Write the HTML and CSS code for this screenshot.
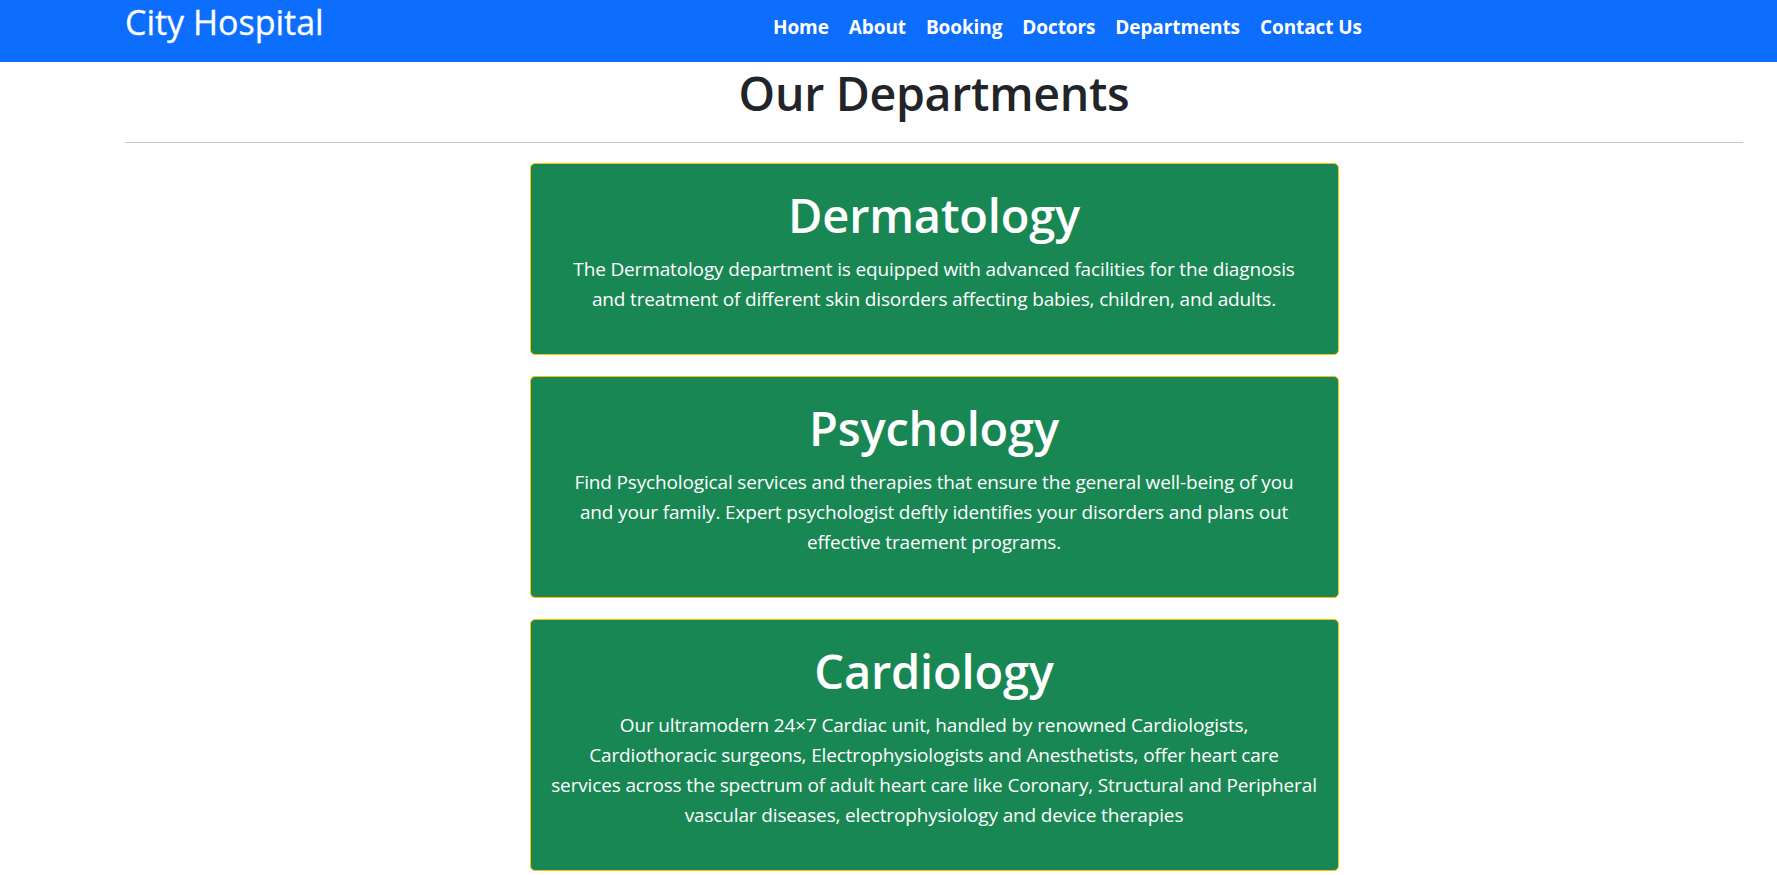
FILE: index.html
```html
<!DOCTYPE html>
<html lang="en">
<head>
<meta charset="utf-8">
<title>City Hospital - Departments</title>
<link rel="stylesheet" href="styles.css">
</head>
<body>
<nav class="navbar">
  <div class="nav-inner">
    <a class="brand" href="#">City Hospital</a>
    <ul class="nav-links">
      <li><a href="#">Home</a></li>
      <li><a href="#">About</a></li>
      <li><a href="#">Booking</a></li>
      <li><a href="#">Doctors</a></li>
      <li><a href="#">Departments</a></li>
      <li><a href="#">Contact Us</a></li>
    </ul>
  </div>
</nav>
<main class="page">
  <h1 class="page-title">Our Departments</h1>
  <hr class="divider">
  <div class="dept-list">
    <section class="dept-card">
      <h2 class="dept-name">Dermatology</h2>
      <p class="dept-text">The Dermatology department is equipped with advanced facilities for the diagnosis<br>and treatment of different skin disorders affecting babies, children, and adults.</p>
    </section>
    <section class="dept-card">
      <h2 class="dept-name">Psychology</h2>
      <p class="dept-text">Find Psychological services and therapies that ensure the general well-being of you<br>and your family. Expert psychologist deftly identifies your disorders and plans out<br>effective traement programs.</p>
    </section>
    <section class="dept-card">
      <h2 class="dept-name">Cardiology</h2>
      <p class="dept-text">Our ultramodern 24×7 Cardiac unit, handled by renowned Cardiologists,<br>Cardiothoracic surgeons, Electrophysiologists and Anesthetists, offer heart care<br>services across the spectrum of adult heart care like Coronary, Structural and Peripheral<br>vascular diseases, electrophysiology and device therapies</p>
    </section>
  </div>
</main>
</body>
</html>
```
FILE: styles.css
```css
* {
  box-sizing: border-box;
}

html, body {
  margin: 0;
  padding: 0;
}

body {
  font-family: "Open Sans", "Noto Sans", sans-serif;
  font-size: 19px;
  line-height: 1.5;
  color: #212529;
  background: #ffffff;
  overflow: hidden;
}

.navbar {
  background: #0d6efd;
  height: 62px;
}

.nav-inner {
  display: grid;
  grid-template-columns: 638px auto;
  padding-left: 125px;
  padding-right: 34px;
  height: 100%;
}

.brand {
  color: #ffffff;
  text-decoration: none;
  font-size: 34px;
  line-height: 42px;
  padding-top: 1px;
  font-weight: 400;
  white-space: nowrap;
  -webkit-text-stroke: 0.3px #ffffff;
}

.nav-links {
  list-style: none;
  margin: 0;
  padding: 0;
  display: flex;
  align-items: flex-start;
}

.nav-links a {
  display: block;
  color: #ffffff;
  text-decoration: none;
  font-weight: 700;
  font-size: 19px;
  line-height: 30px;
  padding: 12px 10px 0;
  white-space: nowrap;
  letter-spacing: -0.1px;
}

.page {
  padding: 0 34px 0 125px;
}

.page-title {
  margin: 0;
  text-align: center;
  font-size: 46.5px;
  line-height: 60px;
  font-weight: 600;
  letter-spacing: -0.3px;
  padding-top: 1px;
  height: 60px;
  color: #212529;
}

.divider {
  margin: 20px 0;
  border: 0;
  border-top: 1px solid #c7c8c9;
  height: 0;
}

.dept-list {
  display: flex;
  flex-direction: column;
  align-items: center;
  gap: 21px;
}

.dept-card {
  width: 809px;
  background: #198754;
  border: 1px solid #ffc107;
  border-radius: 5px;
  padding: 20px;
  color: #ffffff;
  text-align: center;
}

.dept-name {
  margin: 0 0 10px;
  font-size: 47px;
  line-height: 60px;
  font-weight: 600;
  letter-spacing: -0.2px;
  padding-top: 1px;
  height: 60px;
}

.dept-text {
  margin: 0 0 20px;
  font-size: 19px;
  line-height: 30px;
  letter-spacing: -0.15px;
  white-space: nowrap;
}
```
